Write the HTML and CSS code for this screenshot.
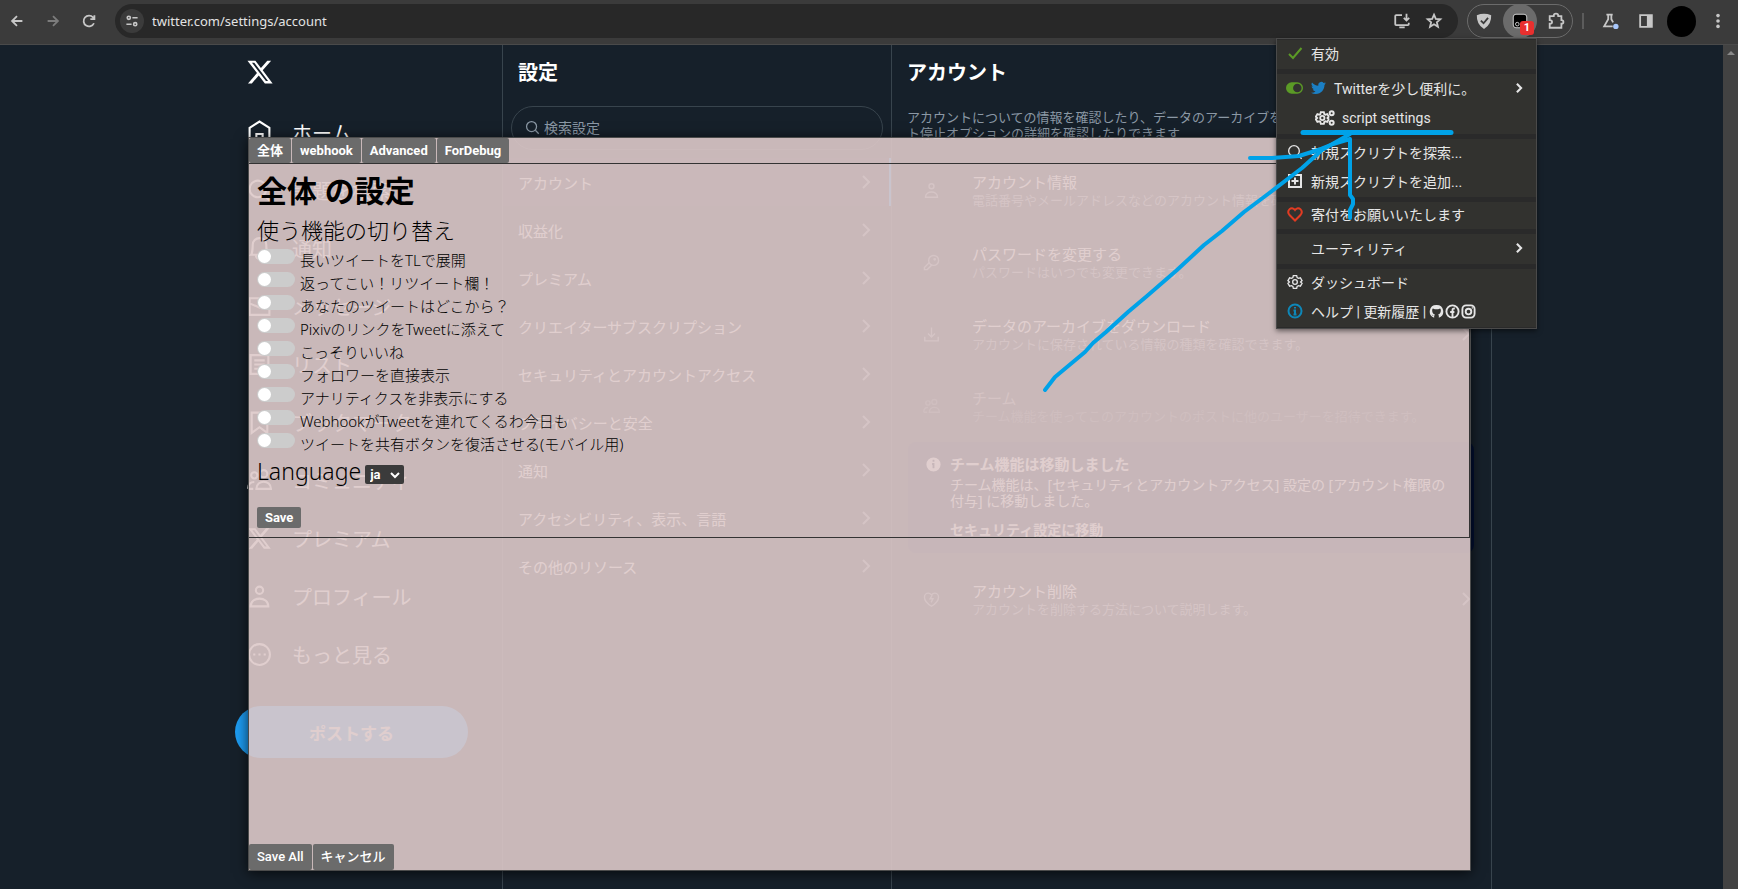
FILE: index.html
```
<!DOCTYPE html>
<html lang="ja">
<head>
<meta charset="utf-8">
<title>設定 / X</title>
<link rel="stylesheet" href="styles.css">
</head>
<body>
<svg class="defs" aria-hidden="true">
  <symbol id="chev" viewBox="0 0 20 20"><path d="M7 4l6 6-6 6"/></symbol>
  <symbol id="x" viewBox="0 0 24 24"><path d="M18.244 2.25h3.308l-7.227 8.26 8.502 11.24H16.17l-5.214-6.817L4.99 21.75H1.68l7.73-8.835L1.254 2.25H8.08l4.713 6.231zm-1.161 17.52h1.833L7.084 4.126H5.117z"/></symbol>
  <symbol id="user" viewBox="0 0 24 24"><circle cx="12" cy="6" r="3.5"/><path d="M3.500 21.500c0-10 17-10 17 0z"/></symbol>
  <symbol id="search" viewBox="0 0 24 24"><circle cx="10.500" cy="10.500" r="8"/><path d="M16.500 16.500l5.500 5.500"/></symbol>
  <symbol id="people" viewBox="0 0 24 24"><circle cx="7" cy="7" r="3"/><circle cx="16" cy="5.500" r="3.500"/><path d="M9 20c0-9 14-9 14 0zM1 20c0-4 2-6.500 6-6.500M1 20h5"/></symbol>
  <symbol id="gear" viewBox="0 0 24 24"><circle cx="12" cy="12" r="3.500"/><path d="M9.500 2.500h5l.7 3 2 1.100 2.900-.9 2.500 4.200-2.200 2.100 2.200 2.100-2.500 4.200-2.900-.9-2 1.100-.7 3h-5l-.7-3-2-1.100-2.900.9-2.500-4.200L3.600 12 1.400 9.900l2.500-4.200 2.900.9 2-1.100z"/></symbol>
</svg>

<header class="toolbar">
  <div class="nav-buttons">
    <button class="tool" aria-label="戻る"><svg viewBox="0 0 20 20"><path d="M16 10H5M10 4.500L4.500 10l5.500 5.500"/></svg></button>
    <button class="tool dim" aria-label="進む"><svg viewBox="0 0 20 20"><path d="M4 10h11M10 4.500l5.500 5.500-5.500 5.500"/></svg></button>
    <button class="tool" aria-label="再読み込み"><svg viewBox="0 0 20 20"><path d="M15.500 12.500A6 6 0 1 1 14.500 6l1.500 2M16 3.500V8h-4.500"/></svg></button>
  </div>
  <div class="omnibox">
    <button class="site-info" aria-label="サイト情報"><svg viewBox="0 0 20 20"><circle cx="6" cy="6" r="2"/><path d="M10.500 6H17M3 14h6.500"/><circle cx="14" cy="14" r="2"/></svg></button>
    <input class="url" aria-label="アドレス" value="twitter.com/settings/account">
    <button class="tool" aria-label="インストール"><svg viewBox="0 0 20 20"><path d="M10 3.500H3.500Q2.500 3.500 2.500 4.500v9q0 1 1 1h13q1 0 1-1V12M15 2v7M12 6.500L15 9.500l3-3M7 17h6"/></svg></button>
    <button class="tool" aria-label="ブックマーク"><svg viewBox="0 0 20 20"><path d="M10 3l2 4.700 5 .4-3.800 3.300 1.200 5L10 13.700l-4.400 2.700 1.200-5L3 8.100l5-.4z"/></svg></button>
  </div>
  <div class="extensions">
    <button class="tool" aria-label="AdGuard"><svg viewBox="0 0 20 20"><path class="shield" d="M2 3.500Q10 .5 18 3.500q.5 10-8 15.500-8.500-5.500-8-15.500z"/><path class="shield-check" d="M6.500 9.500l3 3 5-6"/></svg></button>
    <button class="tool tamper" aria-label="Tampermonkey"><svg viewBox="0 0 20 20"><rect class="tm" x="2.500" y="2.500" width="15" height="15" rx="3"/><circle class="tm-eye" cx="7" cy="13.500" r="2"/></svg><span class="badge">1</span></button>
    <button class="tool" aria-label="拡張機能"><svg viewBox="0 0 20 20"><path d="M3 4.500h4.500C7.500 1 12.500 1 12.500 4.500H16V9c3 0 3 4 0 4v4.500H3V13c3.500 0 3.500-4 0-4z"/></svg></button>
  </div>
  <span class="divider"></span>
  <div class="end-buttons">
    <button class="tool" aria-label="試験運用"><svg viewBox="0 0 20 20"><path d="M6 3h7M8 3v5L3.500 16H13M11.500 3v5l2 3.500"/><circle class="dot" cx="16.500" cy="16" r="3"/></svg></button>
    <button class="tool" aria-label="サイドパネル"><svg viewBox="0 0 20 20"><path d="M3.500 3.500h13v13h-13z"/><path class="solid" d="M11 3.500h5.500v13H11z"/></svg></button>
    <button class="avatar" aria-label="プロフィール"></button>
    <button class="tool more" aria-label="メニュー"><svg viewBox="0 0 20 20"><g class="solid-dots"><circle cx="10" cy="4" r="2"/><circle cx="10" cy="10" r="2"/><circle cx="10" cy="16" r="2"/></g></svg></button>
  </div>
</header>

<div class="viewport">
  <div class="page">
    <div class="layout">
      <nav class="side">
        <a class="logo" href="#" aria-label="X"><svg><use href="#x"/></svg></a>
        <a href="#"><svg viewBox="0 0 24 24"><path d="M2.500 7.500L12 1.500l9.500 6V21.500h-6.500v-8H9v8H2.500z"/></svg>ホーム</a>
        <a href="#"><svg><use href="#search"/></svg>話題を検索</a>
        <a href="#"><svg viewBox="0 0 24 24"><path d="M4 18c1-1 1.500-8 1.500-9.500a6.500 6.500 0 0 1 13 0C18.500 10 19 17 20 18zM8.500 18c0 5 7 5 7 0"/></svg>通知</a>
        <a href="#"><svg viewBox="0 0 24 24"><path d="M2.500 4h19v16h-19zM2.500 9l9.500 4 9.500-4"/></svg>メッセージ</a>
        <a href="#"><svg viewBox="0 0 24 24"><path d="M3.500 3h17v18h-17zM7 8h10M7 12h10M7 16h5"/></svg>リスト</a>
        <a href="#"><svg viewBox="0 0 24 24"><path d="M4.500 2.500h15V22L12 16.500 4.500 22z"/></svg>ブックマーク</a>
        <a href="#"><svg><use href="#people"/></svg>コミュニティ</a>
        <a href="#" class="filled"><svg><use href="#x"/></svg>プレミアム</a>
        <a href="#"><svg><use href="#user"/></svg>プロフィール</a>
        <a href="#"><svg viewBox="0 0 24 24"><circle cx="12" cy="12" r="10"/><path d="M6 12h2M11 12h2M16 12h2"/></svg>もっと見る</a>
        <button class="post">ポストする</button>
      </nav>

      <section class="settings">
        <h2>設定</h2>
        <label class="search"><svg><use href="#search"/></svg><input type="search" placeholder="検索設定" aria-label="検索設定"></label>
        <a class="active" href="#">アカウント<svg><use href="#chev"/></svg></a>
        <a href="#">収益化<svg><use href="#chev"/></svg></a>
        <a href="#">プレミアム<svg><use href="#chev"/></svg></a>
        <a href="#">クリエイターサブスクリプション<svg><use href="#chev"/></svg></a>
        <a href="#">セキュリティとアカウントアクセス<svg><use href="#chev"/></svg></a>
        <a href="#">プライバシーと安全<svg><use href="#chev"/></svg></a>
        <a href="#">通知<svg><use href="#chev"/></svg></a>
        <a href="#">アクセシビリティ、表示、言語<svg><use href="#chev"/></svg></a>
        <a href="#">その他のリソース<svg><use href="#chev"/></svg></a>
      </section>

      <main class="detail">
        <h2>アカウント</h2>
        <p class="lead">アカウントについての情報を確認したり、データのアーカイブをダウンロードしたり、アカウント停止オプションの詳細を確認したりできます</p>
        <a class="row" href="#"><svg class="ico"><use href="#user"/></svg><span class="txt"><b>アカウント情報</b><small>電話番号やメールアドレスなどのアカウント情報を確認できます。</small></span><svg class="go"><use href="#chev"/></svg></a>
        <a class="row" href="#"><svg class="ico" viewBox="0 0 24 24"><circle cx="15" cy="9" r="7"/><circle cx="16.500" cy="7.500" r="1"/><path d="M9 12l-7 7v3h4l7-7"/></svg><span class="txt"><b>パスワードを変更する</b><small>パスワードはいつでも変更できます。</small></span><svg class="go"><use href="#chev"/></svg></a>
        <a class="row" href="#"><svg class="ico" viewBox="0 0 24 24"><path d="M12 2v13M7 10.500l5 5 5-5M2.500 15v6h19v-6"/></svg><span class="txt"><b>データのアーカイブをダウンロード</b><small>アカウントに保存されている情報の種類を確認できます。</small></span><svg class="go"><use href="#chev"/></svg></a>
        <a class="row disabled" href="#"><svg class="ico"><use href="#people"/></svg><span class="txt"><b>チーム</b><small>チーム機能を使ってこのアカウントのポストに他のユーザーを招待できます。</small></span></a>
        <aside class="notice">
          <svg viewBox="0 0 18 18"><circle cx="9" cy="9" r="8.500"/><path d="M9 4v2M7.500 8.500H9V13"/></svg>
          <div>
            <h3>チーム機能は移動しました</h3>
            <p>チーム機能は、[セキュリティとアカウントアクセス] 設定の [アカウント権限の付与] に移動しました。</p>
            <a href="#">セキュリティ設定に移動</a>
          </div>
        </aside>
        <a class="row last" href="#"><svg class="ico" viewBox="0 0 24 24"><path d="M12 21.500C-3 12 2 3 7.500 3 10 3 12 5.500 12 5.500S14 3 16.500 3C22 3 27 12 12 21.500zM13 6l-3 5h4l-2.500 5"/></svg><span class="txt"><b>アカウント削除</b><small>アカウントを削除する方法について説明します。</small></span><svg class="go"><use href="#chev"/></svg></a>
      </main>
    </div>

    <form class="modal">
      <div class="tabs">
        <button type="button">全体</button><button type="button">webhook</button><button type="button">Advanced</button><button type="button">ForDebug</button>
      </div>
      <div class="panel">
        <h1>全体 の設定</h1>
        <h2>使う機能の切り替え</h2>
        <label><input type="checkbox">長いツイートをTLで展開</label>
        <label><input type="checkbox">返ってこい！リツイート欄！</label>
        <label><input type="checkbox">あなたのツイートはどこから？</label>
        <label><input type="checkbox">PixivのリンクをTweetに添えて</label>
        <label><input type="checkbox">こっそりいいね</label>
        <label><input type="checkbox">フォロワーを直接表示</label>
        <label><input type="checkbox">アナリティクスを非表示にする</label>
        <label><input type="checkbox">WebhookがTweetを連れてくるわ今日も</label>
        <label><input type="checkbox">ツイートを共有ボタンを復活させる(モバイル用)</label>
        <div class="language">
          <label for="lang">Language</label>
          <span class="select"><select id="lang"><option>ja</option><option>en</option></select><svg viewBox="0 0 10 10"><path d="M1 3l4 4 4-4"/></svg></span>
        </div>
        <button class="save" type="button">Save</button>
      </div>
      <div class="actions">
        <button type="button">Save All</button><button type="button">キャンセル</button>
      </div>
    </form>
  </div>
  <div class="scrollbar"><span class="up"></span></div>
</div>

<div class="menu">
  <div class="group one">
    <a href="#"><svg class="green" viewBox="0 0 16 16"><path d="M2 9l4 4 8.500-10"/></svg>有効</a>
  </div>
  <div class="group scripts">
    <a href="#"><svg class="switch" viewBox="0 0 18 12"><rect x="0" y="0" width="18" height="12" rx="6"/><circle cx="12" cy="6" r="4.500"/></svg><svg class="bird" viewBox="0 0 24 24"><path d="M23.950 4.570a10 10 0 0 1-2.820.770 4.960 4.960 0 0 0 2.160-2.720c-.95.550-2 .950-3.130 1.180a4.920 4.920 0 0 0-8.380 4.480C7.690 8.090 4.070 6.130 1.640 3.160a4.920 4.920 0 0 0 1.520 6.570 4.900 4.900 0 0 1-2.230-.61v.06a4.920 4.920 0 0 0 3.950 4.830 5 5 0 0 1-2.210.08 4.940 4.940 0 0 0 4.600 3.420A9.870 9.870 0 0 1 0 19.540a13.990 13.990 0 0 0 7.550 2.210c9.050 0 14-7.500 14-13.990 0-.21 0-.42-.02-.63a9.940 9.940 0 0 0 2.420-2.560z"/></svg><span class="grow">Twitterを少し便利に。</span><svg class="arrow"><use href="#chev"/></svg></a>
    <a href="#" class="sub"><svg class="gears" viewBox="0 0 30 24"><use href="#gear" width="22" height="22" x="0" y="1"/><circle cx="25" cy="5" r="3"/><circle cx="25" cy="19" r="3"/></svg>script settings</a>
  </div>
  <div class="group">
    <a href="#"><svg><use href="#search"/></svg>新規スクリプトを探索...</a>
    <a href="#"><svg viewBox="0 0 16 16"><path d="M2 2h12v12H2zM8 4.500v7M4.500 8h7"/></svg>新規スクリプトを追加...</a>
  </div>
  <div class="group short">
    <a href="#"><svg class="red" viewBox="0 0 16 16"><path d="M8 14.500L2.500 9C-1 4.500 4.500-.5 8 4c3.500-4.500 9 .5 5.500 5z"/></svg>寄付をお願いいたします</a>
  </div>
  <div class="group tall">
    <a href="#"><span class="blank"></span><span class="grow">ユーティリティ</span><svg class="arrow"><use href="#chev"/></svg></a>
  </div>
  <div class="group">
    <a href="#"><svg><use href="#gear"/></svg>ダッシュボード</a>
    <div class="help"><svg class="blue" viewBox="0 0 16 16"><circle cx="8" cy="8" r="6.500"/><path d="M8 4v1.500M6.500 7.500H8v4M6.500 11.500h3"/></svg>
      <span class="links"><a href="#">ヘルプ</a> | <a href="#">更新履歴</a> |</span>
      <span class="social">
        <a href="#" aria-label="GitHub"><svg viewBox="0 0 16 16"><path class="fill" d="M8 1a7 7 0 0 0-2.500 13.600v-2.200c-2 .4-2.500-1-2.500-1l1 .2c.8 1.200 1.600.8 1.800.6l.5-1C3 10.800 2.800 5.500 4.200 4.800l2 .7h3.600l2-.7c1.400.7 1.200 6-2.100 6.400.6.400.8 1 .8 1.800v1.600A7 7 0 0 0 8 1z"/></svg></a>
        <a href="#" aria-label="Facebook"><svg viewBox="0 0 16 16"><circle cx="8" cy="8" r="6.500"/><path d="M8 14V6.500Q8 4.500 10.500 4.800M5.500 8.500H10"/></svg></a>
        <a href="#" aria-label="Instagram"><svg viewBox="0 0 16 16"><rect x="1.500" y="1.500" width="13" height="13" rx="4"/><circle cx="8" cy="8" r="3"/><path d="M11.500 4h1"/></svg></a>
      </span>
    </div>
  </div>
</div>

<svg class="scribble" viewBox="0 0 420 280" aria-hidden="true">
  <path class="thick" d="M265 22.500H413"/>
  <path d="M7 280l10-13 12-10 18-15 8-9 13-11 22-20 19-16 30-26 27-25 18-14 22-19 24-18 34-26 20-18 28-16"/>
  <path d="M212 48h22l27-2 19-6 15-6 17-5v56l3 4v5l-3 6v8"/>
</svg>
</body>
</html>
```
FILE: styles.css
```
* { box-sizing: border-box; }

body {
  margin: 0;
  position: relative;
  display: flex;
  flex-direction: column;
  height: 100vh;
  overflow: hidden;
  background: #16202a;
  color: #fff;
  font-family: "Noto Sans", "Noto Sans CJK JP", sans-serif;
  font-size: 15px;
}
h1, h2, h3, p { margin: 0; }
a { color: inherit; text-decoration: none; }
button, input, select { font: inherit; color: inherit; border: 0; padding: 0; margin: 0; background: none; }
svg { fill: none; stroke: currentColor; stroke-width: 2; flex: none; }
.defs { position: absolute; width: 0; height: 0; }

/* Browser toolbar */
.toolbar {
  display: flex;
  align-items: center;
  flex: none;
  height: 45px;
  padding: 0 10px 7px 7px;
  background: #3b3b3b;
  border-bottom: 1px solid #4a4a4a;
  color: #c7c7c7;
}
.tool { display: flex; align-items: center; justify-content: center; width: 20px; height: 20px; }
.tool svg { width: 18px; height: 18px; }
.dim { color: #7c7c7c; }
.nav-buttons { display: flex; gap: 16px; margin-right: 16px; padding-top: 5px; }
.omnibox {
  display: flex;
  align-items: center;
  gap: 12px;
  flex: 1;
  height: 34px;
  margin-top: 5px;
  padding: 0 14px 0 5px;
  border-radius: 17px;
  background: #282828;
}
.site-info { width: 24px; height: 24px; border-radius: 50%; background: #3b3b3b; padding: 4px; }
.site-info svg { display: block; width: 16px; height: 16px; }
.url { flex: 1; min-width: 0; height: 24px; margin-left: -4px; font-size: 13px; color: #e3e3e3; outline: 0; }
.extensions {
  display: flex;
  align-items: center;
  justify-content: space-between;
  width: 106px;
  height: 34px;
  margin: 5px 0 0 9px;
  padding: 0 6px;
  border: 1px solid #6b6b6b;
  border-radius: 17px;
}
.shield { fill: #c7c7c7; stroke: none; }
.shield-check { stroke: #3b3b3b; }
.tamper { position: relative; width: 34px; height: 34px; border-radius: 50%; background: #6b6b6b; }
.tm { fill: #000; stroke: #ddd; stroke-width: 1; }
.tm-eye { stroke: #ddd; stroke-width: 1; }
.badge {
  position: absolute;
  right: 3px;
  bottom: 3px;
  width: 14px;
  height: 14px;
  border-radius: 3px;
  background: #e8302f;
  color: #fff;
  font: bold 11px/14px Roboto, sans-serif;
}
.divider { width: 2px; height: 16px; margin: 5px 16px 0 9px; background: #5c5c5c; }
.end-buttons { display: flex; align-items: center; gap: 16px; padding-top: 5px; }
.dot { fill: #a8c7fa; stroke: none; }
.solid, .solid-dots, .fill { fill: currentColor; stroke: none; }
.avatar { width: 29px; height: 31px; margin-left: -5px; border-radius: 50%; background: #000; }
.more { margin-left: -4px; }

/* Page shell */
.viewport { display: flex; flex: 1; min-height: 0; }
.page { position: relative; flex: 1; min-width: 0; overflow: hidden; }
.layout { display: flex; max-width: 1261px; min-height: 100%; margin: 0 auto; }
.scrollbar { width: 15px; background: #424242; padding: 6px 4px; }
.up { display: block; border: 4px solid transparent; border-top: 0; border-bottom-color: #8a8a8a; }

/* Left navigation */
.side { flex: 0 0 271px; padding: 0 34px 0 4px; }
.side a { display: flex; align-items: center; gap: 20px; height: 58px; padding-left: 12px; font-size: 20px; }
.side a svg { width: 25px; height: 25px; }
.side .logo { height: 58px; padding: 0 0 4px 11px; }
.side .logo svg { width: 28px; height: 28px; fill: currentColor; stroke: none; }
.side .filled svg { fill: currentColor; stroke: none; }
.post {
  display: block;
  width: 100%;
  height: 52px;
  margin-top: 23px;
  border-radius: 26px;
  background: #1d9bf0;
  font-size: 17px;
  font-weight: 700;
}

/* Settings list */
.settings, .detail { border-left: 1px solid #38444d; }
.settings { flex: 0 1 389px; }
.settings h2, .detail h2 { height: 54px; padding-left: 15px; font-size: 20px; line-height: 56px; }
.search {
  display: flex;
  align-items: center;
  gap: 4px;
  height: 44px;
  margin: 7px 8px 8px;
  padding: 0 13px 2px;
  border: 1px solid #38444d;
  border-radius: 22px;
  color: #8b98a5;
}
.search svg { width: 15px; height: 15px; }
.search input { flex: 1; min-width: 0; font-size: 14px; outline: 0; }
.search input::placeholder { color: #8b98a5; opacity: 1; }
.settings a { display: flex; align-items: center; justify-content: space-between; height: 48px; padding: 0 15px; }
.settings a svg { width: 20px; height: 20px; color: #8b98a5; }
.settings .active { background: #1e2732; border-right: 2px solid #1d9bf0; padding-right: 13px; }

/* Account detail */
.detail { flex: 0 1 601px; border-right: 1px solid #38444d; }
.lead { margin: 10px 15px 13px; color: #8b98a5; font-size: 13px; line-height: 16px; }
.row { display: flex; align-items: center; height: 72px; padding: 0 15px; }
.ico { width: 17px; height: 17px; margin: 0 32px 0 16px; color: #8b98a5; }
.go { width: 20px; height: 20px; color: #8b98a5; }
.txt { flex: 1; min-width: 0; white-space: nowrap; }
.txt b, .txt small { display: block; }
.txt b { font-size: 15px; font-weight: 400; line-height: 20px; }
.txt small { color: #8b98a5; font-size: 13px; line-height: 16px; }
.disabled { opacity: .5; }
.notice {
  display: flex;
  gap: 8px;
  margin: 0 17px 10px 16px;
  padding: 12px 20px 15px 17px;
  border-radius: 8px;
  background: #020f30;
}
.notice svg { width: 17px; height: 17px; margin-top: 2px; fill: #fff; stroke: #020f30; }
.notice h3 { margin-bottom: 3px; font-size: 15px; line-height: 20px; }
.notice p { font-size: 14px; line-height: 16px; }
.notice a { display: block; margin-top: 13px; font-size: 14px; font-weight: 700; line-height: 16px; }

/* Script settings dialog */
.modal {
  position: absolute;
  inset: 92px 252px 18px 248px;
  display: flex;
  flex-direction: column;
  border: 1px solid #4c4c4c;
  background: rgba(221, 201, 201, .9);
  box-shadow: 0 2px 12px rgba(0, 0, 0, .7);
  color: #000;
}
.tabs, .actions { display: flex; gap: 1px; height: 26px; }
.tabs { height: 25px; }
.actions { margin-top: auto; }
.modal button {
  padding: 0 8px;
  border-radius: 2px;
  background: #6b6b6b;
  color: #fff;
  font: bold 13px/20px Roboto, "Noto Sans CJK JP", sans-serif;
}
.modal .actions button { font-weight: 500; }
.panel { border: 1px solid #333; border-left: 0; padding: 7px 8px 9px; font-weight: 300; }
.panel h1 { font-size: 30px; line-height: 40px; }
.panel h2 { font-size: 22px; font-weight: 300; line-height: 38px; }
.panel > label { display: flex; gap: 5px; height: 23px; line-height: 22px; }
.panel input {
  appearance: none;
  width: 38px;
  height: 15px;
  padding: 1px;
  border-radius: 8px;
  background: #ccc;
}
.panel input::before { content: ""; display: block; width: 13px; height: 13px; border-radius: 50%; background: #fff; }
.language { display: flex; align-items: center; gap: 4px; height: 34px; padding-bottom: 4px; font-size: 23px; }
.select { position: relative; margin-top: 6px; }
.select select {
  appearance: none;
  display: block;
  width: 39px;
  height: 19px;
  padding-left: 5px;
  border-radius: 2px;
  background: #3b3b3b;
  color: #fff;
  font: bold 13px/19px Roboto, sans-serif;
}
.select svg { position: absolute; right: 4px; top: 5px; width: 10px; height: 10px; color: #fff; pointer-events: none; }
.modal .save { display: block; height: 21px; margin-top: 17px; }

/* Extension popup */
.menu {
  position: absolute;
  top: 38px;
  right: 201px;
  width: 261px;
  padding: 1px 0;
  border: 1px solid #4a4a4a;
  background: #2a2a2a;
  box-shadow: 0 2px 5px rgba(0, 0, 0, .5);
  color: #e6e6e6;
  font-family: Roboto, "Noto Sans CJK JP", sans-serif;
  font-size: 14px;
}
.group { margin-bottom: 5px; padding: 0 10px; background: #32322f; }
.group:last-child { margin: 0; }
.group > a, .help { display: flex; align-items: center; gap: 8px; height: 29px; padding-bottom: 3px; }
.group svg, .blank { width: 16px; height: 16px; }
.short > a { height: 27px; }
.scripts > a, .tall > a { height: 30px; }
.grow { flex: 1; }
.menu .green { color: #5b9a26; }
.menu .red { color: #e23b22; }
.menu .blue { color: #0e87b8; }
.menu .switch { width: 17px; height: 12px; margin-left: -1px; color: #5b9a26; fill: currentColor; stroke: none; }
.switch circle { fill: #32322f; }
.menu .bird { width: 15px; fill: #1b7fc4; stroke: none; }
.menu .sub { padding-left: 28px; gap: 7px; }
.menu .gears { width: 20px; stroke-width: 3; }
.menu .arrow { width: 14px; height: 14px; stroke-width: 3; }
.social { display: flex; gap: 1px; margin-left: -5px; }
.social a { display: flex; }
.menu .social svg { width: 15px; height: 15px; }

/* Hand-drawn pointer */
.scribble {
  position: absolute;
  top: 110px;
  right: 280px;
  width: 420px;
  height: 280px;
  overflow: visible;
  color: #00a2e8;
  stroke-width: 4;
  stroke-linecap: round;
  stroke-linejoin: round;
  pointer-events: none;
}
.thick { stroke-width: 5; }
```
